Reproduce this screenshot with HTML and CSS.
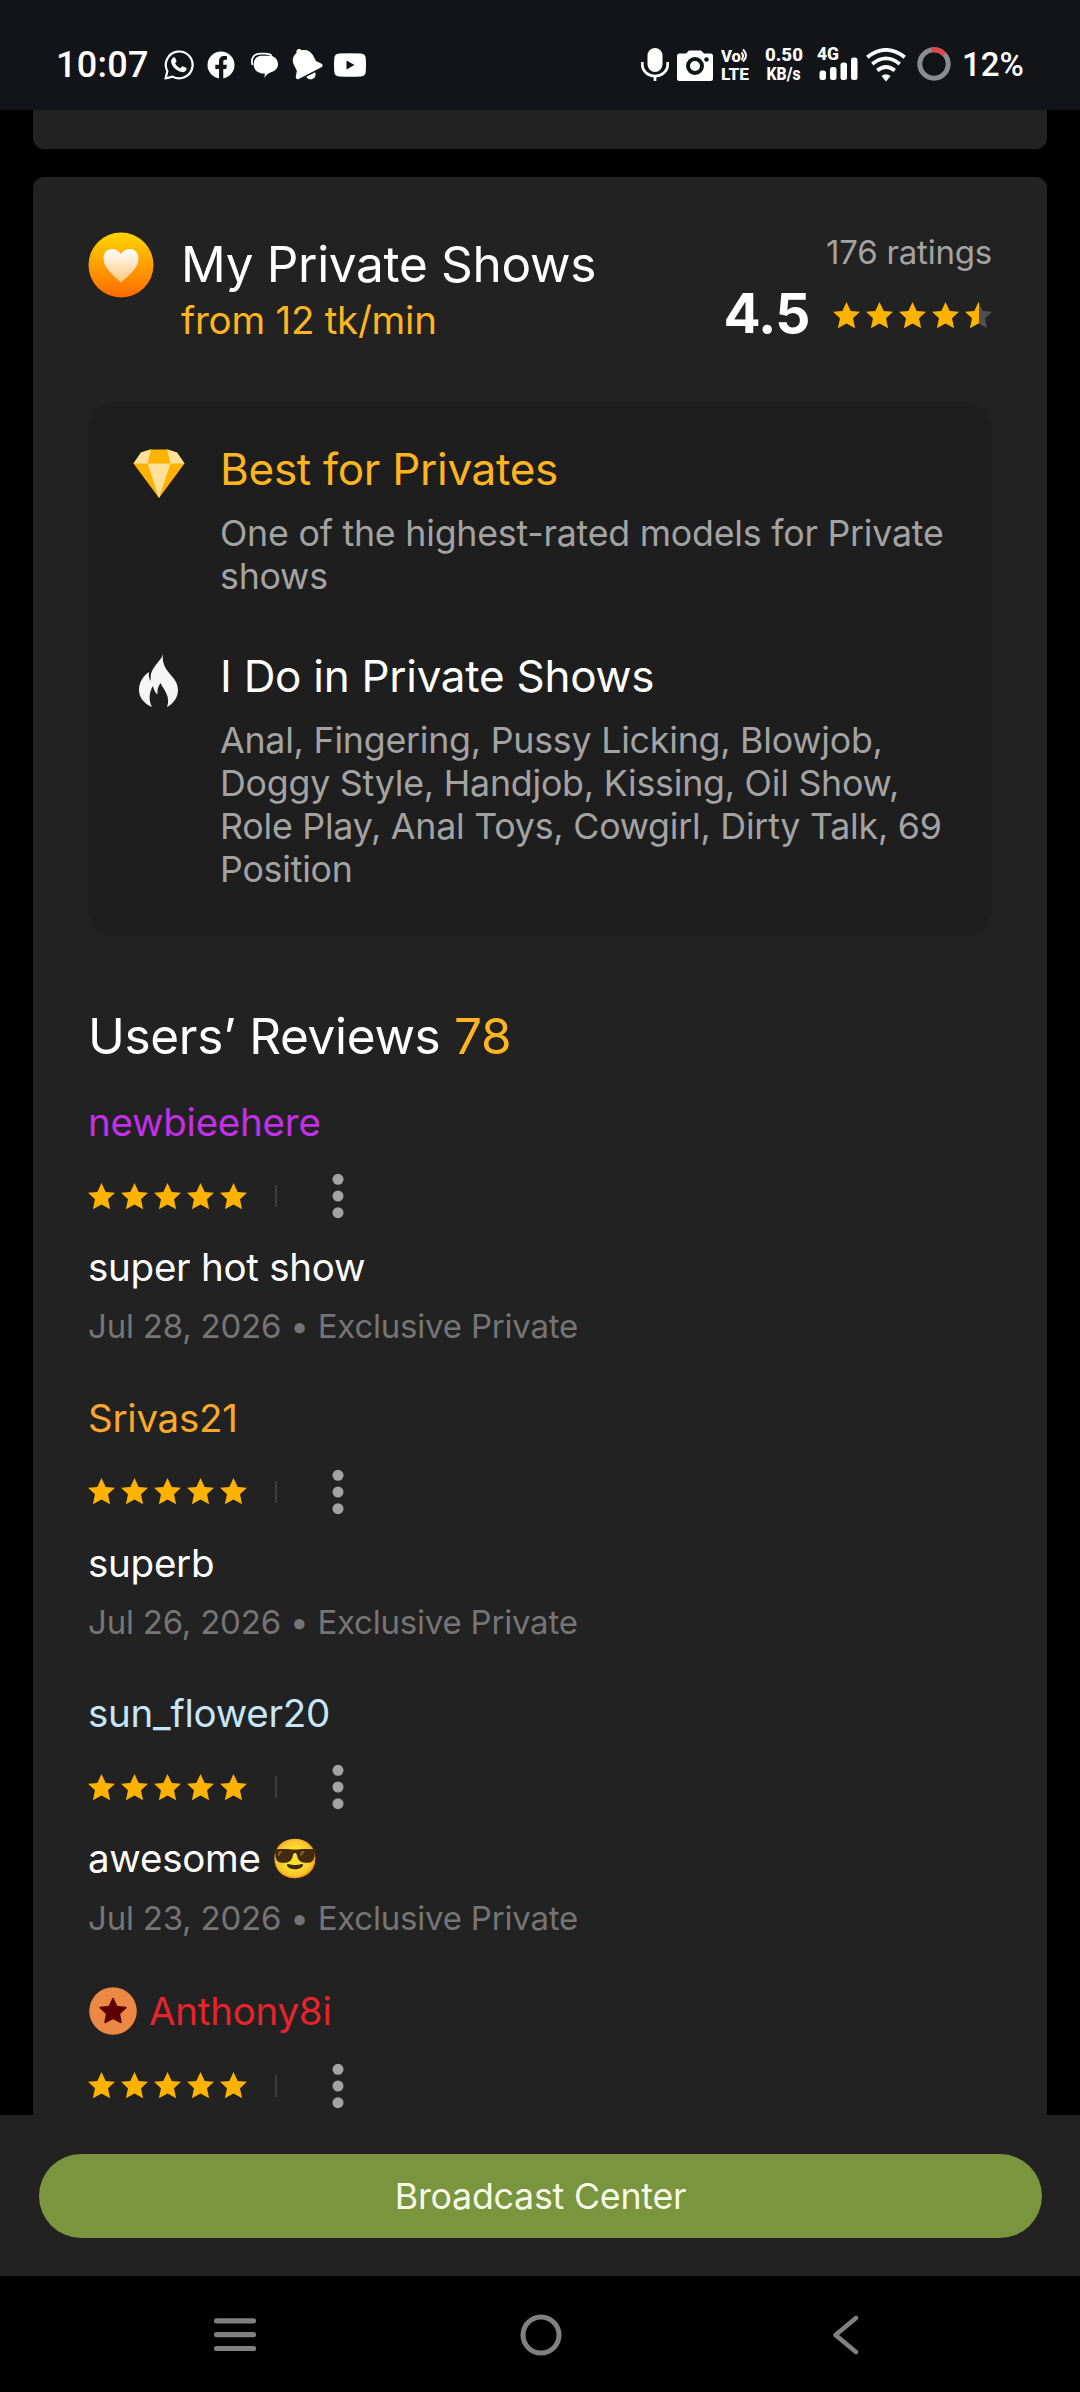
FILE: index.html
```html
<!DOCTYPE html>
<html lang="en">
<head>
<meta charset="utf-8">
<title>My Private Shows</title>
<link rel="stylesheet" href="styles.css">
</head>
<body>
<svg class="defs" width="0" height="0" aria-hidden="true">
  <defs>
    <symbol id="star" viewBox="0 0 27 27"><path d="M13.5 0l4.2 8.9 9.3.8-7 6.6 2.1 9.9-8.6-4.7-8.6 4.7 2.1-9.9-7-6.6 9.3-.8z"/></symbol>
    <symbol id="dots" viewBox="0 0 12 46"><circle cx="6" cy="6.3" r="5.5"/><circle cx="6" cy="23" r="5.5"/><circle cx="6" cy="39.7" r="5.5"/></symbol>
    <linearGradient id="gold" x1="0" y1="0" x2="0" y2="1"><stop offset="0" stop-color="#ffd500"/><stop offset="1" stop-color="#ff6a00"/></linearGradient>
    <linearGradient id="cream" x1="0" y1="0" x2="0" y2="1"><stop offset="0" stop-color="#fff"/><stop offset="1" stop-color="#ffc67a"/></linearGradient>
    <linearGradient id="half"><stop offset=".52" stop-color="#ffb300"/><stop offset=".52" stop-color="#505050"/></linearGradient>
  </defs>
</svg>

<header class="status">
  <span class="clock">10:07</span>
  <svg class="s-wa" width="32" height="32" viewBox="0 0 32 32"><path d="M4.4 22.300A13.400 13.400 0 1 1 9.600 27.600L2.500 29.500z" fill="none" stroke="#fff" stroke-width="2.200" stroke-linejoin="round"/><path d="M10.300 8.500c.5-.5 1.500-.4 1.800.3l1.300 2.900c.2.500.1.900-.2 1.300l-1.100 1.300c1.200 2.400 2.900 4 5.400 5l1.300-1.600c.4-.5.8-.6 1.400-.3l2.700 1.300c.7.300.8.800.7 1.400-.4 2.400-2.800 3.500-5 3-5.500-1.300-9.600-5.300-10.500-10-.3-1.900.7-3.500 2.200-4.600z" fill="#fff"/></svg>
  <svg class="s-fb" width="28" height="28" viewBox="0 0 28 28"><circle cx="14" cy="14" r="13.500" fill="#fff"/><path d="M12 28V18H8.300v-4.200H12v-3.300c0-3.500 2-5.400 5.300-5.400 1.300 0 2.700.2 2.700.2v3.500h-1.700c-1.500 0-2 .9-2 1.900v3.100h3.600l-.6 4.200h-3V28z" fill="#131418"/></svg>
  <svg class="s-msg" width="27" height="27" viewBox="0 0 27 27"><path d="M1.500 13C-.5 6 3 1.700 9.500 1.700h4.500c3 0 5 .3 6.800 1.800" fill="none" stroke="#fff" stroke-width="1.800"/><path d="M10.500 3.700h8a8.300 8.300 0 0 1 1.500 16.500c-3 1.200-5.500 3-6.500 5.800l.3-4.500C7 21.500 2.700 18 2.700 12.500c0-5 3-8.800 7.800-8.800z" fill="#fff"/></svg>
  <svg class="s-bell" width="32" height="34" viewBox="0 0 32 34"><g fill="#fff" transform="translate(-1.500 -.8) rotate(-27 16 17)"><path d="M16 .3c1.500 0 2.700 1 2.700 2.500 5 1 8 4.900 8 9.700v6.500l3.500 4.500c1.200 1.500.5 3.500-1.500 3.500H3.300c-2 0-2.700-2-1.500-3.500L5.300 19v-6.500c0-4.800 3-8.700 8-9.700C13.300 1.300 14.500.3 16 .3z"/><path d="M11 28.500h10c-.3 3-2.300 4.800-5 4.800s-4.700-1.800-5-4.800z"/></g></svg>
  <svg class="s-yt" width="32" height="24" viewBox="0 0 32 24"><path fill="#fff" fill-rule="evenodd" d="M5 .6Q16-.2 27 .6q4.300.3 4.700 4.500.6 6.900 0 13.800-.4 4.200-4.700 4.500-11 .8-22 0Q.7 23.100.3 18.900q-.6-6.900 0-13.800Q.7.900 5 .6zM12.500 7.500v9l8-4.500z"/></svg>
  <svg class="s-mic" width="28" height="34" viewBox="0 0 28 34"><rect x="6.500" y="0" width="15" height="24" rx="7.500" fill="#fff"/><path d="M1.300 14v2.500a12.700 11.500 0 0 0 25.400 0V14M14 28v5" fill="none" stroke="#fff" stroke-width="2.700"/></svg>
  <svg class="s-cam" width="36" height="31" viewBox="0 0 36 31"><path d="M2.500 3.500H9L12 .5h12l3 3h6.500A2.500 2.500 0 0 1 36 6v22.500a2.500 2.500 0 0 1-2.500 2.500h-31A2.500 2.500 0 0 1 0 28.500V6a2.500 2.500 0 0 1 2.500-2.500z" fill="#fff"/><circle cx="18" cy="16" r="7" fill="none" stroke="#131418" stroke-width="4"/><circle cx="29.500" cy="9.500" r="2.300" fill="#131418"/></svg>
  <svg class="s-volte" width="30" height="48" viewBox="0 -6 30 48"><text x="0" y="14.500" font-size="17" textLength="20" lengthAdjust="spacingAndGlyphs">Vo</text><path d="M20.500 5.500q3 3.500 0 7.500M22 2.500q6 6 0 12" fill="none" stroke="#fff" stroke-width="2"/><text x="0" y="33" font-size="17" textLength="28" lengthAdjust="spacingAndGlyphs">LTE</text></svg>
  <svg class="s-rate" width="40" height="48" viewBox="0 -6 40 48"><text x="1" y="14" font-size="19" textLength="38" lengthAdjust="spacingAndGlyphs">0.50</text><text x="2.500" y="33" font-size="18" textLength="34" lengthAdjust="spacingAndGlyphs">KB/s</text></svg>
  <svg class="s-cell" width="41" height="48" viewBox="0 -6 41 48"><text x="0" y="13" font-size="17.500" textLength="22" lengthAdjust="spacingAndGlyphs">4G</text><g fill="#fff"><rect x="2.500" y="23.500" width="6.500" height="9.500" rx="2.500"/><rect x="13" y="20" width="6.500" height="13" rx="2.500"/><rect x="23.500" y="15.500" width="6.500" height="17.500" rx="2.500"/><rect x="34" y="10.500" width="6.500" height="22.500" rx="2.500"/></g></svg>
  <svg class="s-wifi" width="40" height="34" viewBox="0 0 40 34"><g fill="none" stroke="#fff" stroke-width="3.800"><path d="M1.300 9.300Q20-5.500 38.700 9.300"/><path d="M6.300 16Q20 4.800 33.700 16"/><path d="M11.300 22.500Q20 15.500 28.700 22.500"/></g><path d="M15.500 28q4.500-3.600 9 0L20 33.500z" fill="#fff"/></svg>
  <svg class="s-ring" width="34" height="34" viewBox="0 0 34 34"><circle cx="17" cy="17" r="14.200" fill="none" stroke="#8b8c90" stroke-width="5"/><path d="M14.800 3A14.200 14.200 0 0 1 27.200 7.200" fill="none" stroke="#e0484c" stroke-width="5"/></svg>
  <span class="battery">12%</span>
</header>

<main class="page">
  <section class="card card-prev"></section>
  <section class="card card-main">
    <div class="head">
      <svg class="head-icon" width="66" height="66" viewBox="0 0 66 66"><circle cx="33" cy="33" r="32.500" fill="url(#gold)"/><path d="M33 50.500C25 43 15.500 36 15.500 26.500c0-6 4-9.500 8.700-9.500 3.800 0 7 2 8.800 5.300C34.800 19 38 17 41.800 17c4.700 0 8.700 3.500 8.700 9.500 0 9.500-9.500 16.500-17.500 24z" fill="url(#cream)"/></svg>
      <div class="head-text">
        <h1 class="title">My Private Shows</h1>
        <p class="price">from 12 tk/min</p>
      </div>
      <div class="rating">
        <p class="count">176 ratings</p>
        <div class="score-row">
          <span class="score">4.5</span>
          <div class="stars"><svg><use href="#star"/></svg><svg><use href="#star"/></svg><svg><use href="#star"/></svg><svg><use href="#star"/></svg><svg class="star-half"><use href="#star"/></svg></div>
        </div>
      </div>
    </div>

    <div class="panel">
      <div class="feature">
        <svg class="f-icon" width="54" height="54" viewBox="0 0 54 54"><path d="M1.500 16.500L9 5.500l9-3h18l9 3 7.500 11L27 51z" fill="#ffb300"/><path d="M1.500 16.500L9 5.500l10-3-3.500 14zM52.500 16.500L45 5.500l-10-3 3.500 14zM15.500 16.500h23L27 51z" fill="#ffe19a"/></svg>
        <div class="f-body">
          <h2 class="f-title gold">Best for Privates</h2>
          <p class="f-desc">One of the highest-rated models for Private shows</p>
        </div>
      </div>
      <div class="feature">
        <svg class="f-icon flame" width="54" height="60" viewBox="0 0 54 60"><path d="M31 4.500c-1 6-7 9.500-11 17.500-1.500 3-1.500 6.500-1.300 10-1.800-2.500-2.200-6-1.700-9C11 27 7 33.500 7 41c0 7.500 5.500 14 13 17-3.500-6.500-3-15 1-21 .8 4 2 6.500 4.500 8.500-.5-4.500.5-8 3-11.500 3.500 7 10.500 14 6.500 24 6-3 11-9.500 11-17C46 26 28.500 24 31 4.500z" fill="#f5f5f5"/></svg>
        <div class="f-body">
          <h2 class="f-title">I Do in Private Shows</h2>
          <p class="f-desc">Anal, Fingering, Pussy Licking, Blowjob, Doggy Style, Handjob, Kissing, Oil Show, Role Play, Anal Toys, Cowgirl, Dirty Talk, 69 Position</p>
        </div>
      </div>
    </div>

    <h2 class="reviews-title">Users’ Reviews <span class="gold">78</span></h2>

    <article class="review">
      <p class="name violet">newbieehere</p>
      <div class="meta"><div class="stars"><svg><use href="#star"/></svg><svg><use href="#star"/></svg><svg><use href="#star"/></svg><svg><use href="#star"/></svg><svg><use href="#star"/></svg></div><span class="bar"></span><svg class="more"><use href="#dots"/></svg></div>
      <p class="comment">super hot show</p>
      <p class="date">Jul 28, 2026 • Exclusive Private</p>
    </article>
    <article class="review">
      <p class="name orange">Srivas21</p>
      <div class="meta"><div class="stars"><svg><use href="#star"/></svg><svg><use href="#star"/></svg><svg><use href="#star"/></svg><svg><use href="#star"/></svg><svg><use href="#star"/></svg></div><span class="bar"></span><svg class="more"><use href="#dots"/></svg></div>
      <p class="comment">superb</p>
      <p class="date">Jul 26, 2026 • Exclusive Private</p>
    </article>
    <article class="review">
      <p class="name ice">sun_flower20</p>
      <div class="meta"><div class="stars"><svg><use href="#star"/></svg><svg><use href="#star"/></svg><svg><use href="#star"/></svg><svg><use href="#star"/></svg><svg><use href="#star"/></svg></div><span class="bar"></span><svg class="more"><use href="#dots"/></svg></div>
      <p class="comment">awesome <span class="emoji">😎</span></p>
      <p class="date">Jul 23, 2026 • Exclusive Private</p>
    </article>
    <article class="review">
      <p class="name red with-badge"><svg width="48" height="48" viewBox="0 0 48 48"><circle cx="24" cy="24" r="23.800" fill="#eb8843"/><path d="M24 11.500l3.800 8 9 1.100-6.500 6 1.700 8.900-8-4.200-8 4.200 1.700-8.900-6.500-6 9-1.100z" fill="#5c0000" stroke="#5c0000" stroke-width="1.500" stroke-linejoin="round"/></svg>Anthony8i</p>
      <div class="meta"><div class="stars"><svg><use href="#star"/></svg><svg><use href="#star"/></svg><svg><use href="#star"/></svg><svg><use href="#star"/></svg><svg><use href="#star"/></svg></div><span class="bar"></span><svg class="more"><use href="#dots"/></svg></div>
    </article>
  </section>
</main>

<footer class="actions"><button class="cta">Broadcast Center</button></footer>

<nav class="sysnav">
  <svg width="42" height="42" viewBox="0 0 42 42"><path d="M2.500 6.800h37M2.500 20.700h37M2.500 34.500h37" stroke="#808080" stroke-width="5.200" stroke-linecap="round"/></svg>
  <svg width="42" height="42" viewBox="0 0 42 42"><circle cx="21" cy="21" r="18" fill="none" stroke="#808080" stroke-width="5"/></svg>
  <svg width="42" height="42" viewBox="0 0 42 42"><path d="M31 4L10.500 21 31 38" fill="none" stroke="#808080" stroke-width="4.600" stroke-linecap="round" stroke-linejoin="round"/></svg>
</nav>
</body>
</html>
```
FILE: styles.css
```css
* { box-sizing: border-box; }
body {
  margin: 0;
  width: 1080px;
  height: 2392px;
  display: flex;
  flex-direction: column;
  overflow: hidden;
  background: #000;
  color: #fff;
  font-family: Inter, "Liberation Sans", sans-serif;
}
h1, h2, p { margin: 0; font-weight: 400; white-space: nowrap; letter-spacing: -.0064em; }
svg { display: block; flex: none; }
.defs { position: absolute; }
.gold { color: #ffb51f; }

/* Status bar */
.status {
  flex: none;
  height: 110px;
  padding: 20px 0 0 56px;
  display: flex;
  align-items: center;
  background: #131418;
  font-family: Roboto, sans-serif;
}
.status text { fill: #fff; font-weight: 800; }
.clock { width: 107px; margin-top: -1px; font-size: 36px; font-weight: 500; letter-spacing: .3px; }
.s-fb { margin-left: 12px; }
.s-msg { margin-left: 15.500px; }
.s-bell { margin-left: 13.500px; }
.s-yt { margin-left: 10.500px; }
.s-mic { margin-left: 275px; }
.s-cam { margin-left: 8px; }
.s-volte { margin-left: 8px; }
.s-rate { margin-left: 13px; }
.s-cell { margin-left: 13.500px; }
.s-wifi { margin-left: 8px; }
.s-ring { margin-left: 11px; margin-top: -2px; }
.battery { margin-left: 11px; margin-top: -1px; font-size: 33px; font-weight: 500; }

/* Cards */
.page {
  flex: 1;
  min-height: 0;
  padding: 0 33px;
  display: flex;
  flex-direction: column;
  gap: 28px;
  overflow: hidden;
}
.card { flex: none; background: #222; border-radius: 11px; }
.card-prev { height: 39px; border-radius: 0 0 11px 11px; }
.card-main { padding: 55px; height: 2100px; }

.head { display: flex; height: 122px; }
.head-text { padding: 2px 0 0 27px; flex: 1; }
.title { font-size: 49.500px; line-height: 60px; }
.price { font-size: 38.500px; line-height: 52px; color: #ffb51f; }
.rating { display: flex; flex-direction: column; align-items: flex-end; }
.count { font-size: 33px; line-height: 40px; color: #a3a3a3; }
.score-row { display: flex; align-items: center; gap: 23.500px; height: 82px; }
.score { font-size: 55px; line-height: 82px; font-weight: 700; letter-spacing: -.8px; }
.stars { display: flex; gap: 6px; fill: #ffb300; }
.stars svg { width: 27px; height: 27px; }
.score-row .stars { margin-top: 4px; }
.stars .star-half { fill: url(#half); }

/* Highlights panel */
.panel {
  margin-top: 48px;
  height: 534px;
  padding: 40px 40px 40px 44px;
  border-radius: 27px;
  background: #1e1e1e;
  display: flex;
  flex-direction: column;
  gap: 51px;
}
.feature { display: flex; gap: 34px; }
.f-icon { margin-top: 5px; }
.flame { margin-top: 0; }
.f-body { flex: 1; }
.f-title { font-size: 44px; line-height: 54px; }
.f-desc {
  margin-top: 16px;
  font-size: 35.750px;
  line-height: 43px;
  color: #a3a3a3;
  white-space: normal;
}

/* Reviews */
.reviews-title { margin-top: 70px; font-size: 49.500px; line-height: 60px; }
.review { margin-top: 47.600px; }
.reviews-title + .review { margin-top: 32px; }
.name { font-size: 38.500px; line-height: 48px; }
.with-badge { display: flex; align-items: center; gap: 12px; height: 51px; padding-left: 1px; }
.with-badge + .meta { margin-top: 24px; }
.violet { color: #c430e8; }
.orange { color: #f9a82c; }
.ice { color: #c5e6fb; }
.red { color: #e8242a; }
.meta { display: flex; align-items: center; height: 50px; margin-top: 25px; }
.bar { width: 2px; height: 22px; margin-left: 28px; background: #3d3d3d; }
.more { width: 12px; height: 46px; margin-left: 55px; fill: #a3a3a3; }
.comment { margin-top: 22px; font-size: 38.500px; line-height: 48px; }
.date { margin-top: 15px; font-size: 33px; line-height: 40px; color: #757575; }
.emoji { font-family: "Noto Color Emoji", sans-serif; }

/* Bottom action */
.actions { flex: none; height: 161px; padding: 39px 38px 38px 39px; background: #222; }
.cta {
  display: block;
  width: 100%;
  height: 84px;
  padding: 0;
  border: 0;
  border-radius: 42px;
  background: #7b943e;
  color: #f6fae8;
  font: 400 35.750px/82px Inter, sans-serif;
  letter-spacing: -.0064em;
}

.sysnav {
  flex: none;
  height: 116px;
  padding: 1px 213px 0 214px;
  display: flex;
  justify-content: space-between;
  align-items: center;
  background: #000;
}
```
